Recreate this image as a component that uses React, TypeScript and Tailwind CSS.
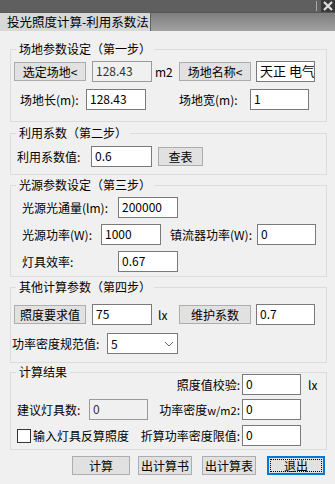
import React from "react";

const font = "font-['Noto_Sans_CJK_SC','Noto_Sans',sans-serif]";

function Btn({ w, children, focus }: { w: string; children: React.ReactNode; focus?: boolean }) {
  if (focus) {
    return (
      <div className={`${w} h-[19px] border-2 border-[#0078d7] bg-[#e1e1e1] p-[1px] flex`}>
        <div className="flex-1 border border-dotted border-black flex items-center justify-center text-[12px] leading-none">
          {children}
        </div>
      </div>
    );
  }
  return (
    <div className={`${w} h-[19px] border border-[#adadad] bg-[#e1e1e1] flex items-center justify-center text-[12px] leading-none`}>
      {children}
    </div>
  );
}

function Field({ w, value, disabled, cls = "" }: { w: string; value: string; disabled?: boolean; cls?: string }) {
  return (
    <div
      className={`${w} h-[21px] border ${disabled ? "border-[#9a9a9a] bg-[#f0f0f0] text-[#333]" : "border-[#7a7a7a] bg-white"} pl-[3px] pt-[2px] text-[12px] leading-[14px] whitespace-nowrap overflow-hidden ${cls}`}
    >
      {value}
    </div>
  );
}

function Group({ title, children, cls = "" }: { title: string; children: React.ReactNode; cls?: string }) {
  return (
    <fieldset className={`ml-[10px] w-[317px] border border-[#dcdcdc] pl-[3px] pr-[3px] ${cls}`}>
      <legend className="ml-[2px] px-[3px] text-[12px] leading-[14px]">{title}</legend>
      {children}
    </fieldset>
  );
}

export default function App() {
  return (
    <div className={`w-[335px] h-[484px] bg-[#f0f0f0] text-black ${font} text-[12px] overflow-hidden`}>
      {/* window caption */}
      <div className="h-[12px] flex bg-[#3a3a3a] bg-[radial-gradient(#8a8a8a_0.6px,transparent_0.8px)] bg-[length:2px_2px]">
        <div className="flex-1" />
        <div className="w-[1px] my-[1px] bg-[#aaaaaa] mr-[4px]" />
        <div className="w-[14px] bg-[#3a3a3a] flex items-center justify-center">
          <svg width="10" height="10" viewBox="0 0 10 10">
            <path d="M1 1 L9 9 M9 1 L1 9" stroke="#e0e0e0" strokeWidth="2.2" />
          </svg>
        </div>
      </div>
      {/* tab row */}
      <div className="h-[19px] flex">
        <div className="w-[150px] bg-[#d8d8d8] border-t border-[#5a5a5a] pl-[7px] text-[12.5px] leading-[18px] whitespace-nowrap">
          投光照度计算-利用系数法
        </div>
        <div className="w-[1px] bg-[#606060]" />
        <div className="flex-1 border-t border-[#555] bg-gradient-to-b from-[#7e7e7e] to-[#a2a2a2]" />
      </div>

      {/* step 1 */}
      <Group title="场地参数设定（第一步）" cls="mt-[11px] h-[80px]">
        <div className="mt-[5px] flex items-start">
          <div className="pt-[1px]"><Btn w="w-[72px]">选定场地&lt;</Btn></div>
          <Field w="w-[60px] ml-[6px]" value="128.43" disabled />
          <div className="ml-[3px] w-[24px] pt-[5px] text-[12px] leading-[12px]">m2</div>
          <div className="pt-[1px]"><Btn w="w-[72px]">场地名称&lt;</Btn></div>
          <Field w="w-[59px] ml-[5px]" value="天正 电气" cls="!text-[13px]" />
        </div>
        <div className="mt-[7px] flex items-center">
          <div className="ml-[6px] w-[66px]">场地长(m):</div>
          <Field w="w-[60px]" value="128.43" />
          <div className="ml-[33px] w-[71px]">场地宽(m):</div>
          <Field w="w-[59px]" value="1" />
        </div>
      </Group>

      {/* step 2 */}
      <Group title="利用系数（第二步）" cls="mt-[4px] h-[49px]">
        <div className="mt-[6px] flex items-center">
          <div className="ml-[3px] w-[74px]">利用系数值:</div>
          <Field w="w-[61px]" value="0.6" />
          <div className="ml-[6px]"><Btn w="w-[45px]">查表</Btn></div>
        </div>
      </Group>

      {/* step 3 */}
      <Group title="光源参数设定（第三步）" cls="mt-[3px] h-[99px]">
        <div className="mt-[5px] flex items-center">
          <div className="ml-[8px] w-[96px]">光源光通量(lm):</div>
          <Field w="w-[60px]" value="200000" />
        </div>
        <div className="mt-[6px] flex items-center">
          <div className="ml-[8px] w-[79px]">光源功率(W):</div>
          <Field w="w-[60px]" value="1000" />
          <div className="ml-[9px] w-[87px] whitespace-nowrap">镇流器功率(W):</div>
          <Field w="w-[59px]" value="0" />
        </div>
        <div className="mt-[6px] flex items-center">
          <div className="ml-[8px] w-[96px]">灯具效率:</div>
          <Field w="w-[60px]" value="0.67" />
        </div>
      </Group>

      {/* step 4 */}
      <Group title="其他计算参数（第四步）" cls="mt-[3px] h-[83px]">
        <div className="mt-[10px] flex items-center">
          <Btn w="w-[72px]">照度要求值</Btn>
          <Field w="w-[60px] ml-[6px]" value="75" />
          <div className="ml-[6px] w-[21px]">lx</div>
          <Btn w="w-[72px]">维护系数</Btn>
          <Field w="w-[59px] ml-[5px]" value="0.7" />
        </div>
        <div className="mt-[8px] flex items-center">
          <div className="ml-[-2px] w-[95px] whitespace-nowrap">功率密度规范值:</div>
          <div className="w-[71px] h-[21px] border border-[#7a7a7a] bg-white flex items-center pl-[3px]">
            <span className="flex-1">5</span>
            <svg width="10" height="6" viewBox="0 0 10 6" className="mr-[3px]">
              <path d="M1 1 L5 5 L9 1" stroke="#666" strokeWidth="1" fill="none" />
            </svg>
          </div>
        </div>
      </Group>

      {/* results */}
      <Group title="计算结果" cls="mt-[2px] h-[85px]">
        <div className="-mt-[5px] flex items-center">
          <div className="w-[226px] text-right">照度值校验:</div>
          <Field w="w-[59px] ml-[2px]" value="0" />
          <div className="ml-[7px]">lx</div>
        </div>
        <div className="mt-[4px] flex items-center">
          <div className="ml-[3px] w-[72px]">建议灯具数:</div>
          <Field w="w-[59px]" value="0" disabled />
          <div className="w-[92px] text-right whitespace-nowrap">功率密度<span className="text-[11px]">w/m2</span>:</div>
          <Field w="w-[59px] ml-[2px]" value="0" />
        </div>
        <div className="mt-[5px] flex items-center">
          <div className="ml-[3px] w-[14px] h-[14px] border border-[#333] bg-white" />
          <div className="ml-[2px] w-[100px] whitespace-nowrap">输入灯具反算照度</div>
          <div className="w-[107px] text-right whitespace-nowrap">折算功率密度限值:</div>
          <Field w="w-[59px] ml-[2px]" value="0" />
        </div>
      </Group>

      {/* bottom buttons */}
      <div className="mt-[6px] flex pl-[72px]">
        <Btn w="w-[58px]">计算</Btn>
        <div className="ml-[8px]"><Btn w="w-[54px]">出计算书</Btn></div>
        <div className="ml-[10px]"><Btn w="w-[54px]">出计算表</Btn></div>
        <div className="ml-[11px]"><Btn w="w-[58px]" focus>退出</Btn></div>
      </div>
    </div>
  );
}
